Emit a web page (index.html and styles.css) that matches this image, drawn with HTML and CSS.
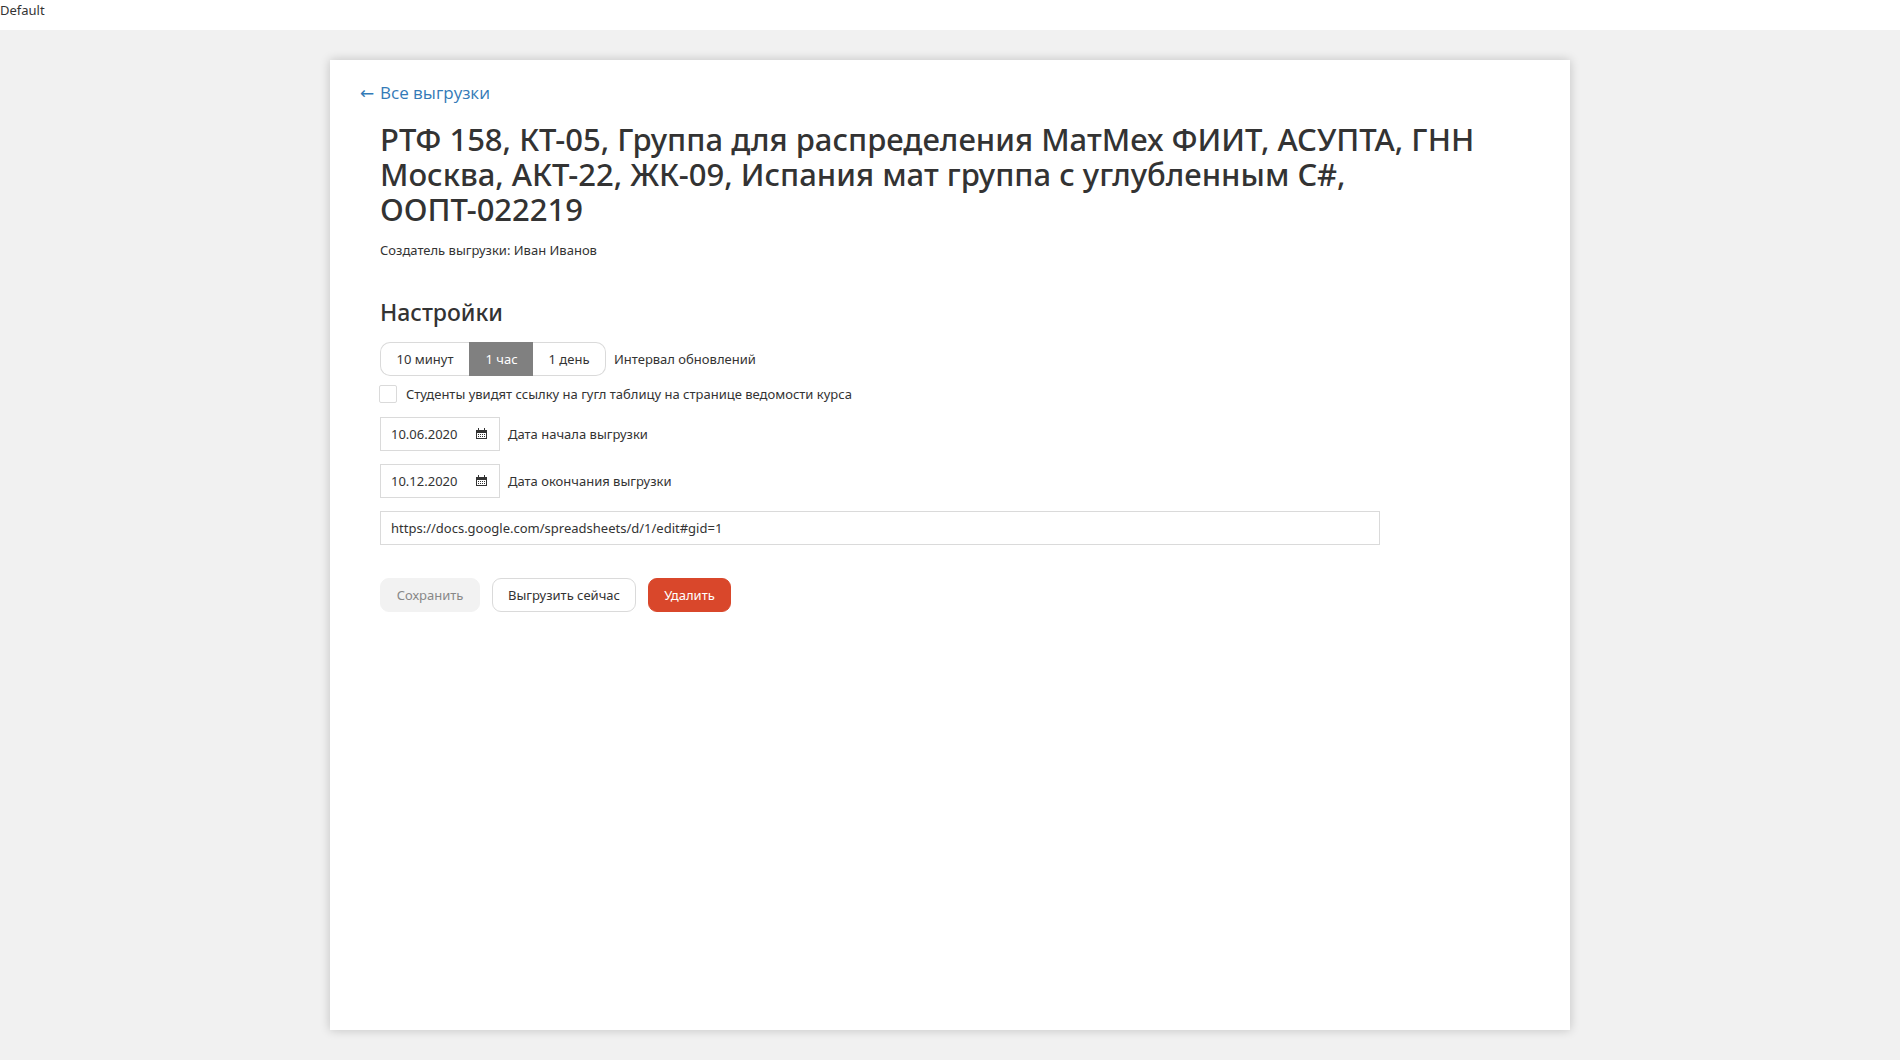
FILE: index.html
```html
<!DOCTYPE html>
<html lang="ru">
<head>
<meta charset="utf-8">
<title>Default</title>
<link rel="stylesheet" href="styles.css">
</head>
<body>
<div class="story-name">Default</div>
<main class="page">
  <section class="card">
    <a class="back-link" href="#"><span class="back-arrow">←</span>Все выгрузки</a>
    <div class="content">
      <header class="header">
        <h1 class="title">РТФ 158, КТ-05, Группа для распределения МатМех ФИИТ, АСУПТА, ГНН Москва, АКТ-22, ЖК-09, Испания мат группа с углубленным C#, ООПТ-022219</h1>
        <p class="creator">Создатель выгрузки: Иван Иванов</p>
      </header>
      <form class="form">
        <h2 class="subtitle">Настройки</h2>
        <div class="row interval">
          <div class="switcher" role="group" aria-labelledby="interval-label">
            <button class="switch" type="button">10 минут</button>
            <button class="switch switch-active" type="button" aria-pressed="true">1 час</button>
            <button class="switch" type="button">1 день</button>
          </div>
          <span id="interval-label">Интервал обновлений</span>
        </div>
        <label class="row visibility"><input class="checkbox" type="checkbox">Студенты увидят ссылку на гугл таблицу на странице ведомости курса</label>
        <div class="row field">
          <div class="date-box">
            <input class="date-input" id="start" type="text" value="10.06.2020">
            <svg class="calendar" viewBox="0 0 11 11" shape-rendering="crispEdges" aria-hidden="true"><path fill-rule="evenodd" d="M0 2h2V0h1v2h5V0h1v2h2v9H0zM1 5v5h9V5z"/><path d="M2 6h1v1H2zM4 6h1v1H4zM6 6h1v1H6zM8 6h1v1H8zM2 8h1v1H2zM4 8h1v1H4zM6 8h1v1H6zM8 8h1v1H8z"/></svg>
          </div>
          <label for="start">Дата начала выгрузки</label>
        </div>
        <div class="row field">
          <div class="date-box">
            <input class="date-input" id="end" type="text" value="10.12.2020">
            <svg class="calendar" viewBox="0 0 11 11" shape-rendering="crispEdges" aria-hidden="true"><path fill-rule="evenodd" d="M0 2h2V0h1v2h5V0h1v2h2v9H0zM1 5v5h9V5z"/><path d="M2 6h1v1H2zM4 6h1v1H4zM6 6h1v1H6zM8 6h1v1H8zM2 8h1v1H2zM4 8h1v1H4zM6 8h1v1H6zM8 8h1v1H8z"/></svg>
          </div>
          <label for="end">Дата окончания выгрузки</label>
        </div>
        <input class="url-input" type="text" aria-label="Ссылка на таблицу" value="https://docs.google.com/spreadsheets/d/1/edit#gid=1">
        <div class="actions">
          <button class="button button-save" type="button" disabled>Сохранить</button>
          <button class="button button-export" type="button">Выгрузить сейчас</button>
          <button class="button button-delete" type="button">Удалить</button>
        </div>
      </form>
    </div>
  </section>
</main>
</body>
</html>
```
FILE: styles.css
```css
* {
  box-sizing: border-box;
}

body {
  margin: 0;
  min-height: 100vh;
  display: flex;
  flex-direction: column;
  background: #fff;
  color: #333;
  font: 13px/20px "Segoe UI", "Noto Sans", "Open Sans", sans-serif;
}

button,
input {
  font: inherit;
  color: inherit;
  margin: 0;
}

.story-name {
  height: 30px;
}

.page {
  flex: 1;
  display: flex;
  padding: 30px;
  background: #f1f1f1;
}

.card {
  flex: 1;
  max-width: 1240px;
  margin: 0 auto;
  padding: 20px 30px;
  background: #fff;
  box-shadow: 0 0 10px rgba(0, 0, 0, 0.2);
}

.back-link {
  display: inline-flex;
  color: #337ab7;
  font-family: "Segoe UI", "Open Sans", sans-serif;
  font-size: 17px;
  line-height: 26px;
  text-decoration: none;
}

.back-arrow {
  width: 20px;
  font-family: "DejaVu Sans", sans-serif;
}

.content {
  padding: 16px 20px 0;
}

.title,
.subtitle {
  font-weight: 500;
}

.title {
  max-width: 1100px;
  margin: 0;
  font-size: 31px;
  line-height: 35px;
}

.creator {
  margin: 13px 0 0;
}

.subtitle {
  margin: 36px 0 0;
  font-size: 23px;
  line-height: 32px;
}

.row {
  display: flex;
  align-items: center;
  gap: 8px;
}

.interval {
  margin-top: 14px;
}

.switcher {
  display: flex;
  height: 34px;
}

.switch {
  padding: 0 14px;
  border: 1px solid #dadada;
  border-right: 0;
  background: #fff;
}

.switch:first-child {
  min-width: 89px;
  border-radius: 10px 0 0 10px;
}

.switch:last-child {
  min-width: 73px;
  border-right: 1px solid #dadada;
  border-left: 0;
  border-radius: 0 10px 10px 0;
}

.switch-active {
  min-width: 64px;
  border-color: #808080;
  background: #808080;
  color: #fff;
}

.visibility {
  width: max-content;
  height: 18px;
  margin: 9px 0 14px -1px;
  gap: 9px;
}

.checkbox {
  appearance: none;
  width: 18px;
  height: 18px;
  border: 1px solid #dadada;
  border-radius: 2px;
  background: #fff;
}

.field {
  margin-bottom: 13px;
}

.date-box {
  width: 120px;
  height: 34px;
  padding: 0 12px 0 10px;
  display: flex;
  align-items: center;
  justify-content: space-between;
  border: 1px solid #dadada;
}

.date-input {
  width: 76px;
  padding: 0;
  border: 0;
  background: none;
}

.calendar {
  width: 11px;
  height: 11px;
  margin-bottom: 1px;
  fill: #333;
  flex: none;
}

.url-input {
  display: block;
  width: 100%;
  max-width: 1000px;
  height: 34px;
  padding: 0 10px;
  border: 1px solid #dadada;
}

.actions {
  display: flex;
  gap: 12px;
  margin-top: 33px;
}

.button {
  height: 34px;
  padding: 0 14px;
  border: 1px solid #dadada;
  border-radius: 9px;
  background: #fff;
}

.button-save {
  min-width: 100px;
  border-color: #f2f2f2;
  background: #f2f2f2;
  color: #888;
}

.button-export {
  min-width: 144px;
}

.button-delete {
  min-width: 83px;
  border-color: #d9472b;
  background: #d9472b;
  color: #fff;
}
```
